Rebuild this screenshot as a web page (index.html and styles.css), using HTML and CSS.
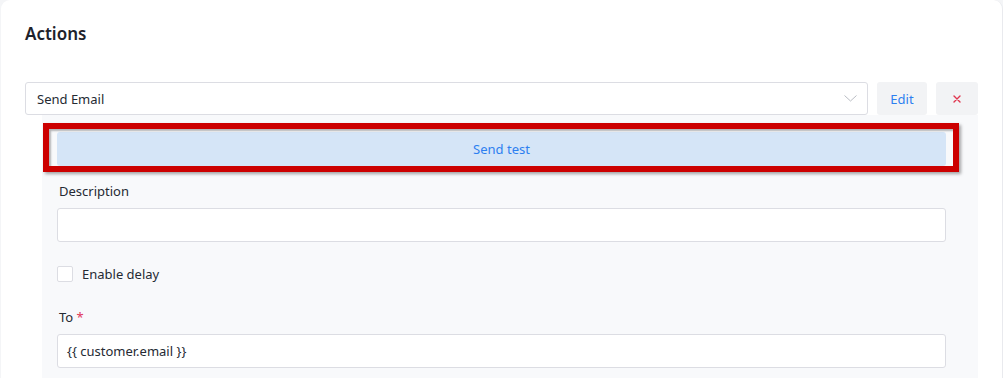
FILE: index.html
```html
<!DOCTYPE html>
<html lang="en">
<head>
<meta charset="utf-8">
<title>Actions</title>
<link rel="stylesheet" href="styles.css">
</head>
<body>
<div class="card">
  <h2 class="title">Actions</h2>
  <div class="action-row">
    <div class="select">
      <span>Send Email</span>
      <svg class="chevron" width="13" height="7" viewBox="0 0 13 7"><polyline points="0.5,0.5 6.5,6 12.5,0.5" fill="none" stroke="#b9bcc3" stroke-width="1"/></svg>
    </div>
    <button class="btn btn-edit">Edit</button>
    <button class="btn btn-remove"><svg width="8" height="8" viewBox="0 0 8 8"><path d="M1 1L7 7M7 1L1 7" stroke="#e0364f" stroke-width="1.4" stroke-linecap="round"/></svg></button>
  </div>
  <div class="panel">
    <button class="send-test">Send test</button>
    <div class="annotation"></div>
    <label class="field-label">Description</label>
    <div class="input"></div>
    <div class="check-row">
      <span class="checkbox"></span>
      <span>Enable delay</span>
    </div>
    <label class="field-label field-label-spaced">To <span class="req">*</span></label>
    <div class="input">{{ customer.email }}</div>
  </div>
</div>
</body>
</html>
```

FILE: styles.css
```css
* { box-sizing: border-box; }
html, body { margin: 0; height: 100%; }
body {
  background: #f4f5f7;
  font-family: "Noto Sans", "Open Sans", sans-serif;
  color: #252a33;
  font-size: 13px;
  overflow: hidden;
}
.card {
  margin-left: 1px;
  height: 100%;
  background: #fff;
  border-radius: 9px 9px 0 0;
  border-right: 1px solid #e9eaee;
  padding: 20px 24px 0 24px;
}
.title {
  margin: 0 0 35px 0;
  font-size: 17px;
  font-weight: 600;
  line-height: 27px;
  color: #1d222b;
}
.action-row {
  display: flex;
  gap: 9px;
  height: 33px;
}
.select {
  flex: 1;
  border: 1px solid #dcdde3;
  border-radius: 3px;
  display: flex;
  align-items: center;
  justify-content: space-between;
  padding: 0 10px 0 11px;
  font-size: 13px;
}
.chevron { display: block; }
.btn {
  border: none;
  background: #f2f3f5;
  border-radius: 3px;
  font-family: inherit;
  font-size: 13px;
  display: flex;
  align-items: center;
  justify-content: center;
  padding: 0;
}
.btn-edit { width: 50px; color: #2d7ff0; }
.btn-remove { width: 42px; }
.panel {
  position: relative;
  margin-left: 17px;
  background: #f8f9fb;
  padding: 17px 32px 10px 15px;
  height: 270px;
}
.send-test {
  display: block;
  width: 100%;
  height: 34px;
  border: none;
  border-radius: 3px;
  background: #d5e5f7;
  color: #2d7ff0;
  font-family: inherit;
  font-size: 13px;
}
.annotation {
  position: absolute;
  left: 1px;
  top: 8px;
  width: 916px;
  height: 49px;
  border: 6px solid #cc0000;
  box-shadow: 2px 2px 3px rgba(0,0,0,0.35), inset 2px 2px 2px rgba(0,0,0,0.28);
  pointer-events: none;
}
.field-label {
  display: block;
  margin: 15px 0 7px 2px;
  line-height: 20px;
  font-size: 13px;
}
.field-label-spaced { margin-top: 23px; }
.req { color: #e0365a; }
.input {
  height: 34px;
  background: #fff;
  border: 1px solid #dcdde3;
  border-radius: 3px;
  padding: 0 9px;
  display: flex;
  align-items: center;
  font-size: 13px;
}
.check-row {
  display: flex;
  align-items: center;
  gap: 9px;
  margin-top: 22px;
  height: 20px;
}
.checkbox {
  width: 16px;
  height: 16px;
  background: #fff;
  border: 1px solid #dcdde3;
  border-radius: 2px;
}
```
